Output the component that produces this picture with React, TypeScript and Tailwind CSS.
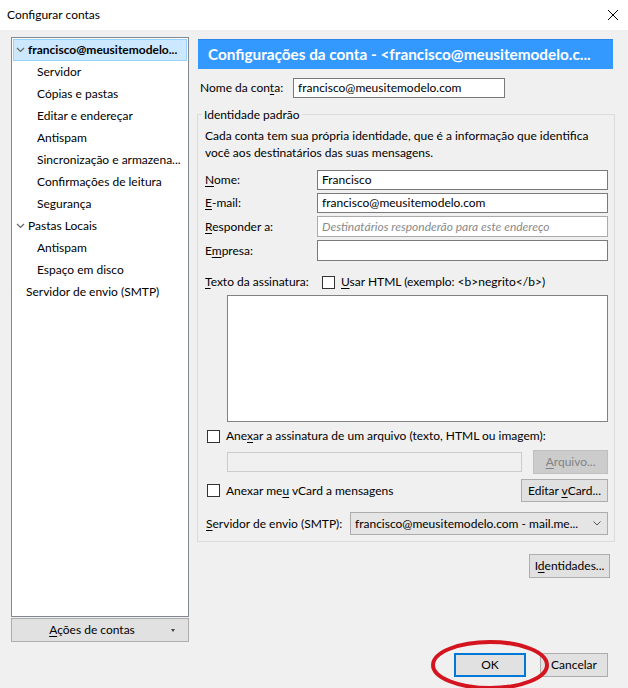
import React from "react";

const U = ({ children }: { children: React.ReactNode }) => <span className="underline underline-offset-2">{children}</span>;

const Check = () => <span className="inline-block w-[13px] h-[13px] border border-[#333333] bg-white shrink-0" />;

const Chevron = () => (
  <svg width="9" height="6" viewBox="0 0 9 6" className="shrink-0">
    <polyline points="1,1 4.5,4.5 8,1" fill="none" stroke="#666" strokeWidth="1.2" />
  </svg>
);

export default function App() {
  const children1 = ["Servidor", "Cópias e pastas", "Editar e endereçar", "Antispam", "Sincronização e armazena...", "Confirmações de leitura", "Segurança"];
  const children2 = ["Antispam", "Espaço em disco"];
  return (
    <div className="w-[628px] h-[688px] bg-[#f0f0f0] relative overflow-hidden text-[12px] text-black" style={{ fontFamily: '"Lato", "Noto Sans", sans-serif' }}>
      {/* title bar */}
      <div className="h-[30px] bg-white flex items-center justify-between pl-[7px] pr-[9px]">
        <span className="text-[12px]">Configurar contas</span>
        <svg width="12" height="12" viewBox="0 0 12 12">
          <path d="M1 1 L11 11 M11 1 L1 11" stroke="#000" strokeWidth="1" />
        </svg>
      </div>
      <div className="flex pt-[7px]">
        {/* left */}
        <div className="ml-[11px] w-[178px] flex flex-col">
          <div className="h-[580px] border border-[#828790] bg-white p-[1px]">
            <div className="h-[22px] bg-[#cce8ff] border border-[#99d1ff] flex items-center pl-[2px] gap-[3px]">
              <Chevron />
              <span className="font-bold whitespace-nowrap">francisco@meusitemodelo...</span>
            </div>
            {children1.map((t) => (
              <div key={t} className="h-[22px] flex items-center pl-[24px] whitespace-nowrap">{t}</div>
            ))}
            <div className="h-[22px] flex items-center pl-[3px] gap-[3px]">
              <Chevron />
              <span>Pastas Locais</span>
            </div>
            {children2.map((t) => (
              <div key={t + "2"} className="h-[22px] flex items-center pl-[24px] whitespace-nowrap">{t}</div>
            ))}
            <div className="h-[22px] flex items-center pl-[13px]">Servidor de envio (SMTP)</div>
          </div>
          <div className="mt-[1px] h-[24px] border border-[#adadad] bg-[#e1e1e1] flex items-center relative">
            <span className="flex-1 text-center pr-[16px]"><U>A</U>ções de contas</span>
            <span className="absolute right-[13px] top-[10px] w-0 h-0 border-l-[2px] border-r-[2px] border-t-[3px] border-l-transparent border-r-transparent border-t-[#444]" />
          </div>
        </div>
        {/* right */}
        <div className="ml-[9px] w-[415px] flex flex-col">
          <div className="mt-[2px] h-[30px] bg-[#3399ff] border-t border-[#2b88e8] flex items-center pl-[10px]">
            <span className="text-white font-bold text-[15.3px] whitespace-nowrap">Configurações da conta - &lt;francisco@meusitemodelo.c...</span>
          </div>
          <div className="mt-[9px] h-[20px] flex items-center">
            <span className="pl-[2px] w-[95px]">Nome da con<U>t</U>a:</span>
            <div className="w-[212px] h-[20px] border border-[#7a7a7a] bg-white flex items-center px-[4px]">francisco@meusitemodelo.com</div>
          </div>
          {/* group box */}
          <div className="mt-[16px] -ml-[1px] w-[418px] h-[428px] border border-[#dcdcdc] relative pl-[7px] pr-[6px]">
            <span className="absolute -top-[9px] left-[4px] bg-[#f0f0f0] px-[2px]">Identidade padrão</span>
            <div className="pt-[12px] leading-[17px]">
              <div>Cada conta tem sua própria identidade, que é a informação que identifica</div>
              <div>você aos destinatários das suas mensagens.</div>
            </div>
            <div className="mt-[9px] flex flex-col gap-[3px]">
              <div className="flex items-center h-[20px]">
                <span className="w-[112px]"><U>N</U>ome:</span>
                <div className="flex-1 h-[20px] border border-[#7a7a7a] bg-white flex items-center px-[4px]">Francisco</div>
              </div>
              <div className="flex items-center h-[20px]">
                <span className="w-[112px]"><U>E</U>-mail:</span>
                <div className="flex-1 h-[20px] border border-[#7a7a7a] bg-white flex items-center px-[4px]">francisco@meusitemodelo.com</div>
              </div>
              <div className="flex items-center h-[21px]">
                <span className="w-[112px]"><U>R</U>esponder a:</span>
                <div className="flex-1 h-[21px] border border-[#ababab] bg-white flex items-center px-[4px] italic text-[#8a8a8a]">Destinatários responderão para este endereço</div>
              </div>
              <div className="flex items-center h-[21px]">
                <span className="w-[112px]">E<U>m</U>presa:</span>
                <div className="flex-1 h-[21px] border border-[#7a7a7a] bg-white" />
              </div>
            </div>
            <div className="mt-[11px] h-[20px] flex items-center">
              <span className="w-[117px]"><U>T</U>exto da assinatura:</span>
              <Check />
              <span className="ml-[6px]"><U>U</U>sar HTML (exemplo: &lt;b&gt;negrito&lt;/b&gt;)</span>
            </div>
            <div className="mt-[3px] ml-[22px] h-[127px] border border-[#828282] bg-white" />
            <div className="mt-[6px] h-[16px] flex items-center pl-[2px]">
              <Check />
              <span className="ml-[6px]">Ane<U>x</U>ar a assinatura de um arquivo (texto, HTML ou imagem):</span>
            </div>
            <div className="mt-[6px] flex items-center ml-[22px]">
              <div className="w-[296px] h-[20px] border border-[#cccccc] bg-[#f0f0f0]" />
              <div className="ml-[11px] w-[75px] h-[24px] border border-[#bfbfbf] bg-[#cccccc] flex items-center justify-center text-[#838383]"><span><U>A</U>rquivo...</span></div>
            </div>
            <div className="mt-[5px] flex items-center justify-between">
              <div className="flex items-center pl-[2px]">
                <Check />
                <span className="ml-[6px]">Anexar me<U>u</U> vCard a mensagens</span>
              </div>
              <div className="w-[87px] h-[23px] border border-[#adadad] bg-[#e1e1e1] flex items-center justify-center"><span>Editar <U>v</U>Card...</span></div>
            </div>
            <div className="mt-[10px] flex items-center">
              <span className="w-[145px] pl-[1px]"><U>S</U>ervidor de envio (SMTP):</span>
              <div className="flex-1 h-[23px] border border-[#adadad] bg-[#e5e5e5] flex items-center pl-[4px] pr-[6px] justify-between">
                <span className="whitespace-nowrap">francisco@meusitemodelo.com - mail.me...</span>
                <svg width="8" height="5" viewBox="0 0 8 5"><polyline points="0.5,0.5 4,4 7.5,0.5" fill="none" stroke="#555" strokeWidth="1" /></svg>
              </div>
            </div>
          </div>
          <div className="mt-[12px] flex justify-end pr-[3px]">
            <div className="w-[81px] h-[24px] border border-[#adadad] bg-[#e1e1e1] flex items-center justify-center"><span>I<U>d</U>entidades...</span></div>
          </div>
          <div className="mt-[75px] flex justify-end gap-[14px] pr-[5px]">
            <div className="w-[72px] h-[24px] border-2 border-[#0078d7] bg-[#e1e1e1] flex items-center justify-center">OK</div>
            <div className="w-[68px] h-[24px] border border-[#adadad] bg-[#e1e1e1] flex items-center justify-center">Cancelar</div>
          </div>
        </div>
      </div>
      {/* red annotation ellipse */}
      <svg className="absolute left-[428px] top-[636px]" width="126" height="56" viewBox="0 0 126 56">
        <ellipse cx="62" cy="29" rx="57" ry="23" fill="none" stroke="#d4141e" strokeWidth="4" />
      </svg>
    </div>
  );
}
